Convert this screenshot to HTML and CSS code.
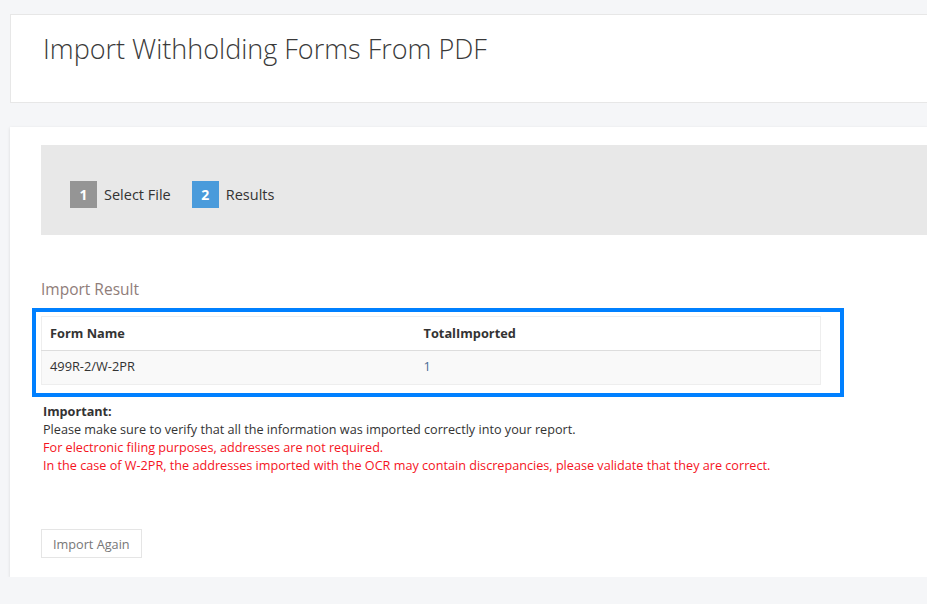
FILE: index.html
```html
<!DOCTYPE html>
<html lang="en">
<head>
  <meta charset="UTF-8">
  <title>Import Withholding Forms From PDF</title>
  <link rel="stylesheet" href="styles.css">
</head>
<body>
  <div class="page">
    <div class="card card--title">
      <h1 class="page-title">Import Withholding Forms From PDF</h1>
    </div>

    <div class="card card--main">
      <div class="steps">
        <div class="step">
          <span class="step__num">1</span>
          <span class="step__label">Select File</span>
        </div>
        <div class="step step--active">
          <span class="step__num">2</span>
          <span class="step__label">Results</span>
        </div>
      </div>

      <h3 class="section-title">Import Result</h3>

      <div class="highlight">
        <table class="result-table">
          <thead>
            <tr>
              <th class="col-name">Form Name</th>
              <th>TotalImported</th>
            </tr>
          </thead>
          <tbody>
            <tr>
              <td>499R-2/W-2PR</td>
              <td><a href="#" class="count">1</a></td>
            </tr>
          </tbody>
        </table>
      </div>

      <div class="notes">
        <strong>Important:</strong><br>
        Please make sure to verify that all the information was imported correctly into your report.<br>
        <span class="warn">For electronic filing purposes, addresses are not required.</span><br>
        <span class="warn">In the case of W-2PR, the addresses imported with the OCR may contain discrepancies, please validate that they are correct.</span>
      </div>

      <button class="btn">Import Again</button>
    </div>
  </div>
</body>
</html>
```

FILE: styles.css
```css
html {
  box-sizing: border-box;
}

*, *:before, *:after {
  box-sizing: inherit;
}

body {
  margin: 0;
  overflow: hidden;
  background: #f5f6f8;
  font-family: 'Open Sans', 'Liberation Sans', sans-serif;
  font-size: 13px;
  color: #333;
}

.page {
  padding: 14px 0 0 10px;
  margin-right: -30px;
}

.card {
  background: #fff;
  border: 1px solid #e7e7e7;
}

.card--title {
  height: 89px;
  padding: 0 32px;
}

.page-title {
  margin: 0;
  padding-top: 16px;
  font-size: 27px;
  font-weight: 300;
  line-height: 36px;
  color: #3a3a3a;
}

.card--main {
  margin-top: 24px;
  border: 0;
  padding: 18px 0 19px 31px;
  box-shadow: 0 1px 3px rgba(0,0,0,0.12);
}

.steps {
  display: flex;
  align-items: center;
  gap: 21px;
  height: 90px;
  padding: 9px 0 0 29px;
  background: #e8e8e8;
}

.step {
  display: flex;
  align-items: center;
  gap: 7px;
  font-size: 14.5px;
  color: #333;
}

.step__num {
  width: 27px;
  height: 27px;
  display: flex;
  align-items: center;
  justify-content: center;
  background: #959595;
  color: #fff;
  font-weight: 700;
  font-size: 14px;
}

.step--active .step__num {
  background: #4a9bdb;
}

.section-title {
  margin: 43px 0 0;
  font-size: 15.5px;
  font-weight: 400;
  line-height: 22px;
  color: #8f7d79;
}

.highlight {
  width: 812px;
  margin: 8px 0 0 -9px;
  padding: 4px 19px 8px 5px;
  border: 4px solid #0080ff;
}

.result-table {
  width: 780px;
  border-collapse: collapse;
  border: 1px solid #eee;
  font-size: 12.8px;
}

.result-table th,
.result-table td {
  text-align: left;
  padding: 0 8px;
  height: 34px;
}

.result-table th {
  font-weight: 700;
  border-bottom: 1px solid #ddd;
  padding-top: 0;
  padding-bottom: 1px;
}

.result-table td {
  padding-bottom: 3px;
}

.result-table .col-name {
  width: 374px;
}

.result-table tbody tr {
  background: #f9f9f9;
}

.count {
  color: #4a6d94;
  text-decoration: none;
}

.notes {
  margin: 5px 0 0 2px;
  font-size: 12.65px;
  line-height: 18px;
}

.warn {
  color: #f5141e;
}

.btn {
  margin-top: 55px;
  height: 29px;
  padding: 0 11px;
  background: #fff;
  border: 1px solid #e5e5e5;
  font-family: 'Open Sans', 'Liberation Sans', sans-serif;
  font-size: 12.7px;
  color: #777;
  cursor: pointer;
}
```
